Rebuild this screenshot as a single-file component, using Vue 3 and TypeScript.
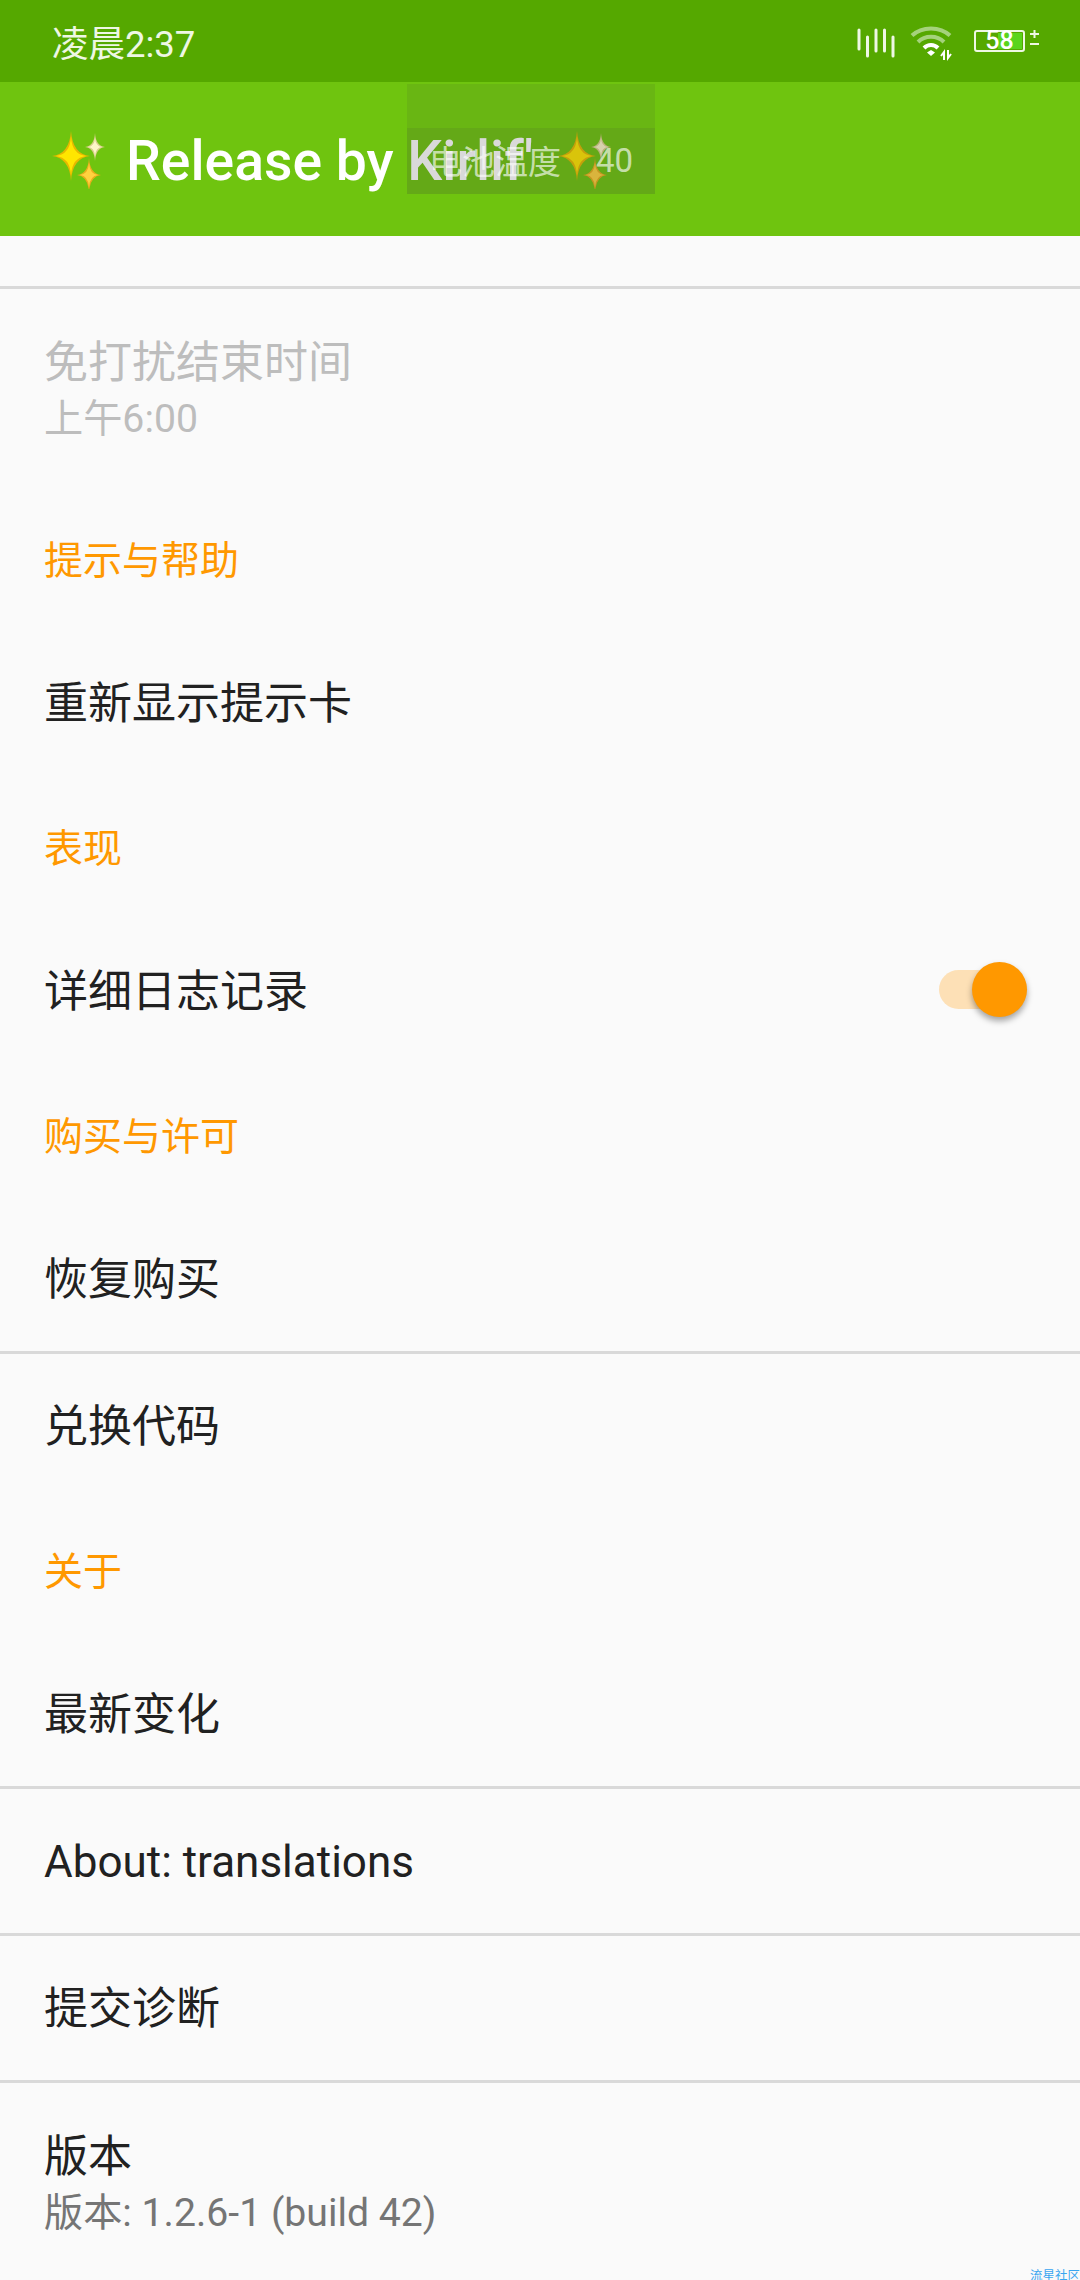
<template>
  <div class="screen">
    <header class="status-bar">
      <span class="time">凌晨2:37</span>
      <div class="status-icons">
        <svg class="signal" width="38" height="30" viewBox="0 0 38 30">
          <path d="M2 2V21M10.500 9V28M19 2V23M27.500 2V23M36 9V28" stroke="#eef7e4" stroke-width="3" stroke-linecap="round" fill="none" />
        </svg>
        <svg class="wifi" width="44" height="36" viewBox="0 0 44 36">
          <path d="M2 10.500C12 1 30 1 40 10.500" stroke="#a5d27c" stroke-width="4" fill="none" />
          <path d="M8 17C15 10 27 10 34 17" stroke="#a5d27c" stroke-width="4" fill="none" />
          <path d="M14 23C18 19 24 19 28 23" stroke="#fff" stroke-width="4" fill="none" />
          <path d="M17 27.500L21 25L25 27.500L21 31Z" fill="#fff" />
          <path d="M34 35V27L31 31M38 25V33L41 29" stroke="#fff" stroke-width="2" fill="none" />
        </svg>
        <div class="battery">
          <span class="battery-fill"></span>
          <span class="battery-level">58</span>
        </div>
        <svg class="charge" width="10" height="18" viewBox="0 0 10 18">
          <path d="M0 6H9M4.500 2V10M0 16H9" stroke="#eef7e4" stroke-width="2" fill="none" />
        </svg>
      </div>
    </header>

    <div class="app-bar">
      <svg class="sparkle" width="60" height="60" viewBox="0 0 60 60">
        <path v-for="p in sparkle" :key="p.d" :d="p.d" :fill="p.fill" />
      </svg>
      <h1 class="app-title">Release by Kirlif'</h1>
      <svg class="sparkle sparkle-end" width="60" height="60" viewBox="0 0 60 60">
        <path v-for="p in sparkle" :key="p.d" :d="p.d" :fill="p.fill" />
      </svg>

      <div class="temp-overlay">
        <div class="temp-row">
          <span>电池温度</span>
          <span>40</span>
        </div>
      </div>
    </div>

    <main class="prefs">
      <div class="top-gap"></div>
      <template v-for="row in rows" :key="row.title">
        <div v-if="row.line" class="divider"></div>
        <div v-if="row.category" class="row category">{{ row.title }}</div>
        <div v-else class="row" :class="{ 'two-line': row.summary, disabled: row.disabled }">
          <div class="row-text">
            <div class="row-title">{{ row.title }}</div>
            <div v-if="row.summary" class="row-summary">{{ row.summary }}</div>
          </div>
          <div v-if="row.toggle" class="switch">
            <span class="switch-thumb"></span>
          </div>
        </div>
      </template>
    </main>

    <span class="watermark">流星社区</span>
  </div>
</template>

<script setup lang="ts">
interface Row {
  title: string
  summary?: string
  category?: boolean
  disabled?: boolean
  toggle?: boolean
  line?: boolean
}

// four pointed star with curved sides
const star = (cx: number, cy: number, w: number, h: number) => {
  const k = 0.08
  const kx = w * k
  const ky = h * k
  return `M${cx} ${cy - h}Q${cx + kx} ${cy - ky} ${cx + w} ${cy}Q${cx + kx} ${cy + ky} ${cx} ${cy + h}Q${cx - kx} ${cy + ky} ${cx - w} ${cy}Q${cx - kx} ${cy - ky} ${cx} ${cy - h}Z`
}

const sparkle = [
  { d: star(45, 18, 10, 14), fill: '#d9cf8c' },
  { d: star(45, 18, 7, 9), fill: '#fdf6c8' },
  { d: star(21, 27, 19, 25), fill: '#e6b800' },
  { d: star(21, 27, 15, 19), fill: '#ffe600' },
  { d: star(39, 46, 12, 17), fill: '#e8ad1c' },
  { d: star(39, 46, 9, 12), fill: '#ffd23f' },
]

const rows: Row[] = [
  { title: '免打扰结束时间', summary: '上午6:00', disabled: true, line: true },
  { title: '提示与帮助', category: true },
  { title: '重新显示提示卡' },
  { title: '表现', category: true },
  { title: '详细日志记录', toggle: true },
  { title: '购买与许可', category: true },
  { title: '恢复购买' },
  { title: '兑换代码', line: true },
  { title: '关于', category: true },
  { title: '最新变化' },
  { title: 'About: translations', line: true },
  { title: '提交诊断', line: true },
  { title: '版本', summary: '版本: 1.2.6-1 (build 42)', line: true },
]
</script>

<style scoped>
.screen {
  position: relative;
  width: 1080px;
  height: 2280px;
  overflow: hidden;
  display: flex;
  flex-direction: column;
  background: #fafafa;
  font-family: Roboto, "Noto Sans CJK SC", sans-serif;
}

.status-bar {
  height: 82px;
  flex: none;
  display: flex;
  align-items: center;
  justify-content: space-between;
  padding: 0 40px 0 52px;
  background: #55a800;
  color: #eef7e4;
}

.time {
  font-size: 36.500px;
}

.status-icons {
  display: flex;
  align-items: center;
}

.signal {
  margin-right: 15px;
  margin-top: 3px;
}

.wifi {
  margin-right: 20px;
  margin-top: 3px;
}

.battery {
  position: relative;
  width: 47px;
  height: 18px;
  border: 2px solid #eef7e4;
  border-radius: 3px;
  display: flex;
  align-items: center;
  justify-content: center;
  margin-right: 5px;
}

.battery-fill {
  position: absolute;
  top: 1px;
  right: 1px;
  bottom: 1px;
  width: 24px;
  background: #5ad41c;
}

.battery-level {
  position: relative;
  font-size: 25px;
  font-weight: 500;
  line-height: 18px;
  color: #fff;
}

.charge {
  margin-bottom: 8px;
}

.app-bar {
  position: relative;
  height: 154px;
  flex: none;
  display: flex;
  align-items: center;
  padding-left: 50px;
  background: #6fc40f;
}

.sparkle {
  flex: none;
}

.sparkle-end {
  margin-left: 23px;
}

.app-title {
  margin: 4px 0 0 16px;
  font-size: 55.300px;
  font-weight: 500;
  color: #fff;
  white-space: nowrap;
}

.temp-overlay {
  position: absolute;
  left: 407px;
  top: 2px;
  width: 248px;
  height: 110px;
  padding-top: 44px;
  box-sizing: border-box;
  background: rgba(60, 60, 60, 0.1);
}

.temp-row {
  height: 66px;
  display: flex;
  align-items: center;
  justify-content: space-between;
  padding: 0 22px 2px 22px;
  box-sizing: border-box;
  background: rgba(60, 60, 60, 0.1);
  font-size: 33px;
  color: rgba(255, 255, 255, 0.65);
}

.prefs {
  flex: 1;
  display: flex;
  flex-direction: column;
}

.top-gap {
  height: 50px;
}

.divider {
  height: 3px;
  background: #d9d9d9;
}

.row {
  height: 144px;
  flex: none;
  box-sizing: border-box;
  display: flex;
  align-items: center;
  justify-content: space-between;
  padding: 2px 53px 0 44px;
  color: #212121;
  font-size: 44px;
}

.two-line {
  height: 198px;
  align-items: flex-start;
  padding-top: 46px;
}

.category {
  padding-top: 0;
  padding-bottom: 4px;
  color: #ff9800;
  font-size: 39px;
}

.row-title {
  line-height: 56px;
}

.row-summary {
  line-height: 56px;
  font-size: 39.200px;
  color: #757575;
}

.disabled .row-title,
.disabled .row-summary {
  color: #bdbdbd;
}

.switch {
  position: relative;
  width: 88px;
  height: 39px;
  margin-bottom: 6px;
  border-radius: 20px;
  background: #fde0b6;
}

.switch-thumb {
  position: absolute;
  top: -8px;
  right: 0;
  width: 55px;
  height: 55px;
  border-radius: 50%;
  background: #ff9800;
  box-shadow: 0 4px 6px rgba(0, 0, 0, 0.35);
}

.watermark {
  position: absolute;
  right: 0;
  bottom: -3px;
  font-size: 12.500px;
  line-height: 14px;
  color: #39a5f0;
}
</style>

<style>
html,
body {
  margin: 0;
  background: #fafafa;
}
</style>
